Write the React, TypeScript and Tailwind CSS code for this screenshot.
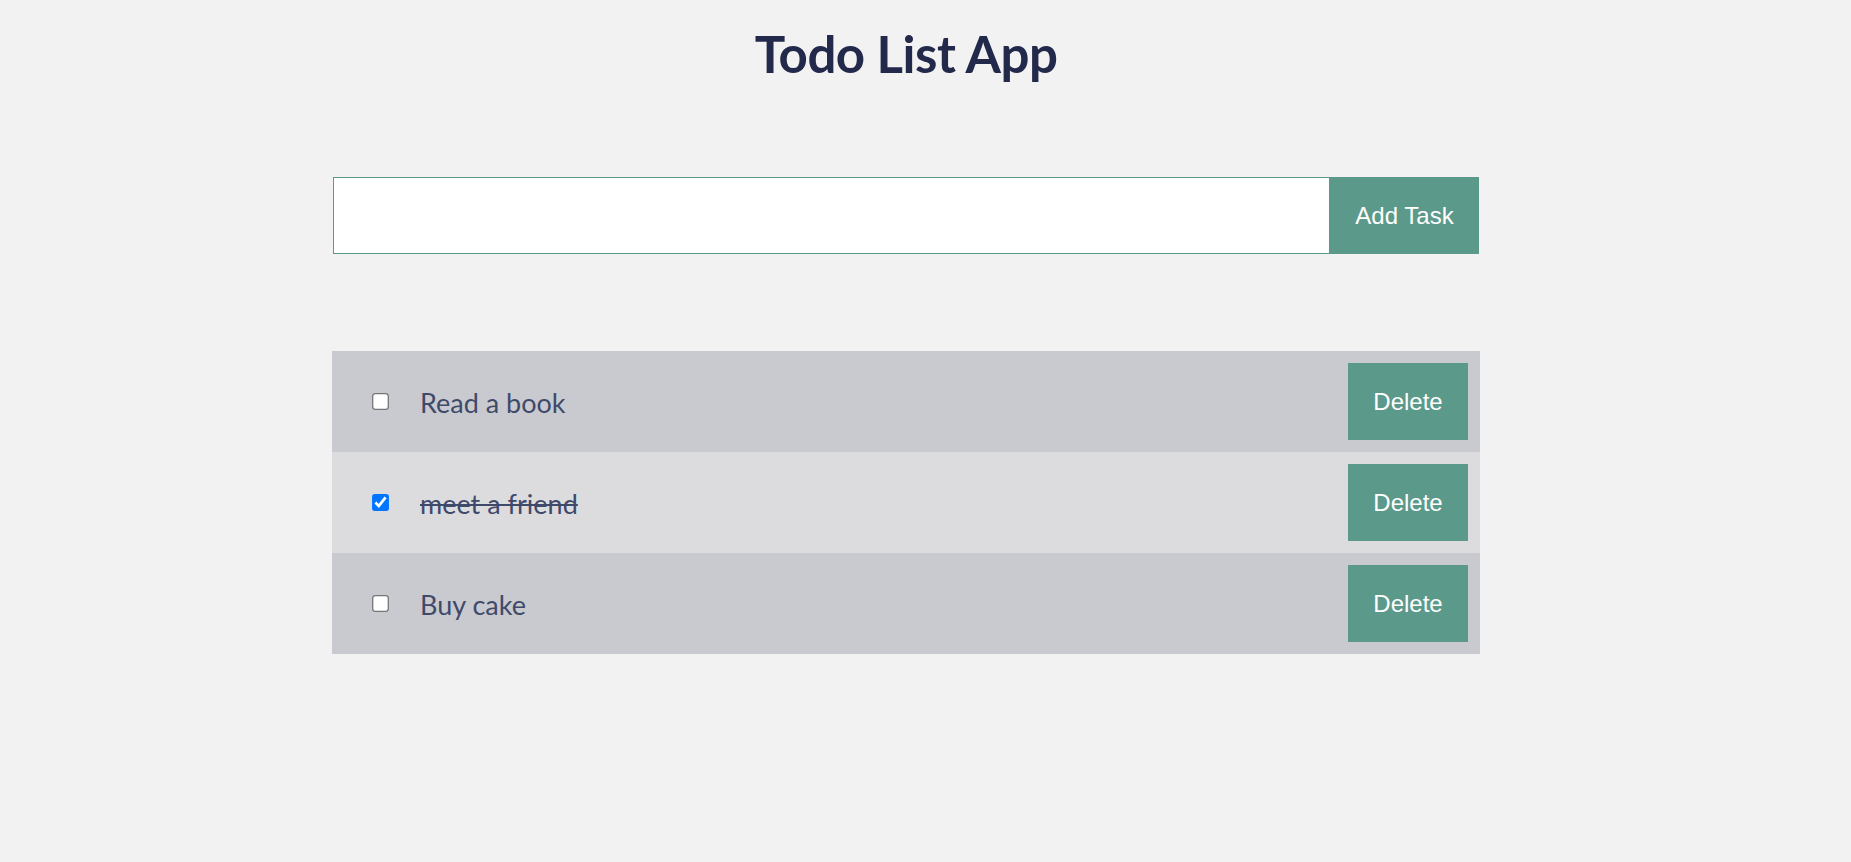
import React, { useState } from 'react';

type Task = { id: number; text: string; done: boolean };

const initialTasks: Task[] = [
  { id: 1, text: 'Read a book', done: false },
  { id: 2, text: 'meet a friend', done: true },
  { id: 3, text: 'Buy cake', done: false },
];

const App = () => {
  const [tasks, setTasks] = useState<Task[]>(initialTasks);
  const [draft, setDraft] = useState('');

  const addTask = () => {
    if (!draft.trim()) return;
    setTasks([...tasks, { id: Date.now(), text: draft.trim(), done: false }]);
    setDraft('');
  };

  const toggle = (id: number) =>
    setTasks(tasks.map((t) => (t.id === id ? { ...t, done: !t.done } : t)));

  const remove = (id: number) => setTasks(tasks.filter((t) => t.id !== id));

  return (
    <div className="min-h-[862px] bg-[#f2f2f2] font-['Lato',sans-serif]">
      <div className="ml-[332px] w-[1148px] pt-[22px]">
        <h1 className="text-center text-[51px] font-bold leading-[64px] tracking-[-0.5px] text-[#23294a]">
          Todo List App
        </h1>

        {/* add form */}
        <div className="mt-[91px] flex h-[77px] pl-px pr-px">
          <input
            value={draft}
            onChange={(e) => setDraft(e.target.value)}
            className="h-full flex-1 border border-[#5b9a8a] bg-white px-4 text-[22px] outline-none"
          />
          <button
            onClick={addTask}
            className="h-full w-[149px] bg-[#5b9a8a] font-['Liberation_Sans',Arial,sans-serif] text-[24px] text-white"
          >
            Add Task
          </button>
        </div>

        {/* task list */}
        <ul className="mt-[97px]">
          {tasks.map((task, i) => (
            <li
              key={task.id}
              className={`flex items-center py-3 pl-[42px] pr-3 ${i % 2 === 1 ? 'bg-[#dcdcdf]' : 'bg-[#c9cacf]'}`}
            >
              <input
                type="checkbox"
                checked={task.done}
                onChange={() => toggle(task.id)}
                className="m-0 h-[13px] w-[13px] scale-[1.3]"
              />
              <span
                className={`ml-[33px] flex-1 pt-[3px] text-[27px] text-[#3f4a6b] ${task.done ? 'line-through' : ''}`}
              >
                {task.text}
              </span>
              <button
                onClick={() => remove(task.id)}
                className="h-[77px] w-[120px] bg-[#5b9a8a] font-['Liberation_Sans',Arial,sans-serif] text-[24px] text-white"
              >
                Delete
              </button>
            </li>
          ))}
        </ul>
      </div>
    </div>
  );
};

export default App;
